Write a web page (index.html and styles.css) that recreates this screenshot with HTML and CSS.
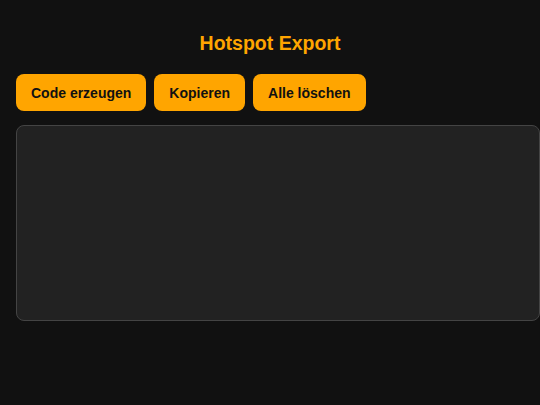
FILE: index.html
```html
<!DOCTYPE html>
<html lang="de">
<head>
<meta charset="utf-8">
<title>Hotspot Export</title>
<link rel="stylesheet" href="styles.css">
</head>
<body>
<h2 class="title">Hotspot Export</h2>
<div class="actions">
  <button class="btn">Code erzeugen</button>
  <button class="btn">Kopieren</button>
  <button class="btn">Alle löschen</button>
</div>
<textarea class="output"></textarea>
</body>
</html>
```
FILE: styles.css
```css
html, body {
  margin: 0;
  background: #111111;
}
body {
  padding: 16px;
  font-family: "Liberation Sans", Arial, sans-serif;
  color: #eeeeee;
}
.title {
  margin: 16px 0 19px;
  font-size: 19.5px;
  line-height: 23px;
  font-weight: bold;
  color: #ffa500;
  text-align: center;
}
.actions {
  display: flex;
  gap: 8px;
  margin-bottom: 14px;
}
.btn {
  background: #ffa500;
  color: #111111;
  border: none;
  border-radius: 8px;
  padding: 10px 15px;
  height: 37px;
  font-family: "Liberation Sans", Arial, sans-serif;
  font-size: 14px;
  font-weight: bold;
  cursor: pointer;
}
.output {
  display: block;
  box-sizing: border-box;
  width: 524px;
  height: 196px;
  padding: 8px;
  margin: 0;
  background: #222222;
  border: 1px solid #444444;
  border-radius: 8px;
  color: #eeeeee;
  resize: none;
}
```
